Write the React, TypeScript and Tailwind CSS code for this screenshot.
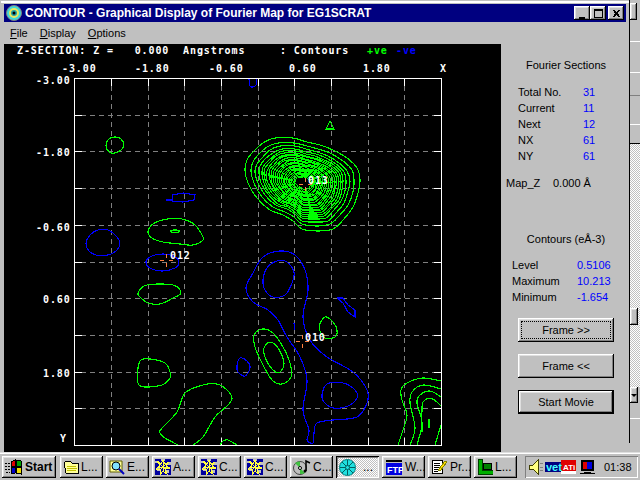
import React from "react";

type P = [number, number];
const smooth = (pts: P[], closed = true) => {
  const n = pts.length;
  const g = (i: number) => (closed ? pts[(i + n) % n] : pts[Math.max(0, Math.min(n - 1, i))]);
  let d = `M${pts[0][0]} ${pts[0][1]}`;
  const m = closed ? n : n - 1;
  for (let i = 0; i < m; i++) {
    const a = g(i - 1), b = g(i), c = g(i + 1), e = g(i + 2);
    const c1 = [b[0] + (c[0] - a[0]) / 6, b[1] + (c[1] - a[1]) / 6];
    const c2 = [c[0] - (e[0] - b[0]) / 6, c[1] - (e[1] - b[1]) / 6];
    d += `C${c1[0].toFixed(1)} ${c1[1].toFixed(1)} ${c2[0].toFixed(1)} ${c2[1].toFixed(1)} ${c[0]} ${c[1]}`;
  }
  return d + (closed ? "Z" : "");
};
const G = "#00ff00";
const B = "#0000ff";

const outer: P[] = [[245,170],[247,160],[253,152],[263,143],[275,138],[293,138],[307,142],[320,145],[333,150],[347,158],[357,168],[360,180],[358,193],[353,207],[343,220],[333,229],[318,231],[302,229],[293,221],[283,215],[270,210],[257,198],[248,183]];
const factors = [1,0.9,0.82,0.76,0.71,0.67,0.63,0.59,0.555,0.52,0.485,0.45,0.415,0.38,0.35,0.32,0.29,0.26,0.23,0.2,0.17,0.14];
const closedGreen: P[][] = [
  [[106,145],[109,139],[115,137],[121,139],[124,145],[121,150],[115,153],[109,152]],
  [[148,232],[153,224],[167,219],[182,219],[195,225],[202,235],[203,240],[193,245],[180,244],[163,242],[152,238]],
  [[170,231],[175,230],[180,231],[175,233]],
  [[138,293],[147,285],[173,285],[181,293],[173,298],[160,304],[148,303],[141,298]],
  [[319,327],[325,317],[333,322],[337,330],[335,337],[325,338]],
  [[254,335],[262,329],[273,333],[283,347],[290,363],[291,377],[282,384],[272,380],[262,363],[255,347]],
  [[264,348],[270,342],[278,348],[284,363],[280,372],[273,370],[265,357]],
  [[138,368],[141,360],[150,359],[165,363],[170,372],[170,378],[162,385],[145,387],[138,383]],
];
const openGreen: P[][] = [
  [[178,445],[165,438],[160,433],[162,428],[177,412],[185,393],[203,385],[217,384],[227,390],[232,398],[228,405],[215,417],[203,437],[193,445]],
  [[220,445],[223,441],[228,440],[237,445]],
  [[398,445],[403,430],[407,415],[402,400],[401,390],[407,383],[423,378],[441,381]],
  [[410,445],[415,428],[410,403],[412,392],[423,385],[441,389]],
  [[417,445],[422,423],[417,403],[420,395],[430,391],[441,397]],
  [[435,445],[441,425]],
  [[422,432],[422,410],[423,402],[430,398],[437,402],[441,406]],
];
const closedBlue: P[][] = [
  [[86,243],[90,235],[98,230],[108,230],[116,236],[120,243],[116,251],[108,255],[96,255],[89,251]],
  [[146,263],[150,257],[163,254],[175,257],[179,263],[175,268],[163,271],[152,269]],
  [[313,443],[307,440],[309,430],[303,410],[307,380],[300,357],[287,337],[278,320],[268,310],[253,302],[246,288],[253,273],[263,257],[280,251],[295,255],[305,270],[308,290],[303,317],[310,340],[327,357],[353,372],[367,390],[367,403],[357,417],[333,420],[317,423],[314,433]],
  [[263,280],[267,268],[277,261],[287,262],[294,272],[292,283],[285,295],[273,297],[265,290]],
  [[237,366],[240,358],[247,361],[250,368],[245,376],[238,372]],
  [[322,395],[327,384],[343,383],[355,390],[357,398],[348,406],[333,408],[324,402]],
];
const polyBlue = ["166,200 172,200 173,195 183,193 195,195 194,200 183,202 172,201","337,298 343,298 348,305 355,310 355,317 348,312 343,303 337,298","294,323 295,330"];
const xs = [111,148,184,221,258,294,331,368,404];
const ys = [115,151,188,225,262,298,335,372,408];

const Cross = ({ x, y }: { x: number; y: number }) => (
  <path d={`M${x-6} ${y}h4M${x+3} ${y}h4M${x} ${y-6}v4M${x} ${y+3}v4`} stroke="#ff8040" fill="none" />
);

const Plot = () => {
  const mono = { fontFamily: '"DejaVu Sans Mono", monospace', fontWeight: 700, fontSize: 10 } as const;
  const T = ({ x, y, c = "#fff", s }: { x: number; y: number; c?: string; s: string }) => (
    <text x={x} y={y} fill={c} style={{ ...mono, letterSpacing: 0.9, whiteSpace: "pre" }}>{s}</text>
  );
  return (
    <svg viewBox="4 44 497 408" className="w-[497px] h-[408px] bg-black block" shapeRendering="crispEdges">
      <T x={17} y={54} s="Z-SECTION: Z =   0.000  Angstroms     : Contours" />
      <T x={367} y={54} c={G} s="+ve" />
      <T x={396} y={54} c={B} s="-ve" />
      {[[62,"-3.00"],[135,"-1.80"],[209,"-0.60"],[289,"0.60"],[363,"1.80"],[440,"X"]].map(([x, s]) => (
        <T key={s as string} x={x as number} y={72} s={s as string} />
      ))}
      {[[36,84,"-3.00"],[36,156,"-1.80"],[36,231,"-0.60"],[43,303,"0.60"],[43,377,"1.80"],[60,442,"Y"]].map(([x, y, s]) => (
        <T key={s as string} x={x as number} y={y as number} s={s as string} />
      ))}
      {xs.map((x) => (
        <g key={x}>
          <path d={`M${x} 86V438`} stroke="#808080" strokeDasharray="5 4" />
          <path d={`M${x} 79v7M${x} 438v7`} stroke="#fff" />
        </g>
      ))}
      {ys.map((y) => (
        <g key={y}>
          <path d={`M81 ${y}H434`} stroke="#808080" strokeDasharray="5 4" />
          <path d={`M75 ${y}h7M434 ${y}h7`} stroke="#fff" />
        </g>
      ))}
      <rect x={74.5} y={78.5} width={367} height={367} fill="none" stroke="#fff" />
      <g fill="none" stroke={G} strokeWidth={1.15}>
        {factors.map((f) => (
          <path key={f} d={smooth(outer.map(([x, y]) => [Math.round(303 + (x - 303) * f), Math.round(183 + (y - 183) * f)] as P))} />
        ))}
        {closedGreen.map((p, i) => <path key={i} d={smooth(p)} />)}
        {openGreen.map((p, i) => <path key={i} d={smooth(p, false)} />)}
        <path d="M330 121L334 129H326Z" />
        <path d="M429 419V428" />
      </g>
      <g fill="none" stroke={B} strokeWidth={1.15}>
        {closedBlue.map((p, i) => <path key={i} d={smooth(p)} />)}
        {polyBlue.map((p) => <polyline key={p} points={p} />)}
        <path d={smooth([[249,79],[250,86],[253,87],[256,85],[257,79]], false)} />
      </g>
      <Cross x={305} y={184} />
      <Cross x={166} y={260} />
      <Cross x={302} y={341} />
      <T x={308} y={184} s="013" />
      <T x={170} y={259} s="012" />
      <T x={305} y={341} s="010" />
    </svg>
  );
};

const RAISED = "shadow-[inset_-1px_-1px_0_#000,inset_1px_1px_0_#fff,inset_-2px_-2px_0_#808080,inset_2px_2px_0_#dfdfdf]";

const Row = ({ l, v, lw }: { l: string; v: string; lw: string }) => (
  <div className="flex h-[16px] items-center">
    <span className={lw}>{l}</span>
    <span className="text-[#0000ff]">{v}</span>
  </div>
);

const Cap = ({ children, sel, def }: { children: React.ReactNode; sel?: boolean; def?: boolean }) => (
  <div className={`mx-[17px] w-[96px] h-[24px] flex items-center justify-center relative bg-[#c0c0c0] ${def ? "border border-black" : ""} ${RAISED}`}>
    {sel && <div className="absolute inset-[3px] border border-dotted border-black" />}
    <span>{children}</span>
  </div>
);

const Flag = () => (
  <svg width="18" height="16" viewBox="0 0 18 16" shapeRendering="crispEdges">
    <path d="M0 4h5M0 7h5M0 10h5M1 13h4" stroke="#000" strokeDasharray="2 1" />
    <path d="M6 3l4-2v6l-4 1z" fill="#e00000" stroke="#000" />
    <path d="M11 1l5 1v6l-5-1z" fill="#00a000" stroke="#000" />
    <path d="M6 9l4-1v6l-4 1z" fill="#0000d0" stroke="#000" />
    <path d="M11 8l5 1v6l-5-1z" fill="#f0e000" stroke="#000" />
  </svg>
);
const Folder = () => (
  <svg width="16" height="16" viewBox="0 0 16 16" shapeRendering="crispEdges">
    <path d="M1 4l2-2h4l2 2h6v10H3z" fill="#ffff99" stroke="#000" />
    <path d="M4 7h9M4 9h10M4 11h9" stroke="#c0c000" />
  </svg>
);
const Explore = () => (
  <svg width="16" height="16" viewBox="0 0 16 16">
    <path d="M1 2h12v11H1z" fill="#ffff99" stroke="#606000" />
    <circle cx="7" cy="7" r="4" fill="#80e0ff" stroke="#000" />
    <path d="M10 10l5 5" stroke="#0000c0" strokeWidth="2" />
  </svg>
);
const Mesh = () => (
  <svg width="16" height="16" viewBox="0 0 16 16" shapeRendering="crispEdges">
    <rect width="16" height="16" fill="#0000a0" />
    <path d="M0 2h3v2H0zM6 0h4v2H6zM12 3h4v3h-4zM2 9h3v3H2zM11 11h3v3h-3z" fill="#c0c0c0" />
    <path d="M2 2l4 3 2-4 2 4 4-2-3 4 4 2-5 1 2 5-4-3-3 4 0-5-4-1 4-3z" fill="none" stroke="#ffff40" />
    <path d="M5 5l6 6M11 5l-6 6M3 8h10M8 3v10" stroke="#ffff40" />
  </svg>
);
const Cd = () => (
  <svg width="18" height="16" viewBox="0 0 18 16">
    <circle cx="7" cy="9" r="6.5" fill="#c0c0c0" stroke="#404040" />
    <path d="M7 9L2 4A7 7 0 0 1 7 2.5zM7 9l5 5a7 7 0 0 1-5 1z" fill="#40c040" />
    <circle cx="7" cy="9" r="1.5" fill="#fff" stroke="#000" />
    <path d="M13 12V2l4 2" stroke="#000" strokeWidth="1.5" fill="none" />
    <circle cx="12" cy="12" r="1.5" fill="#000" />
  </svg>
);
const Snow = () => (
  <svg width="17" height="17" viewBox="0 0 17 17">
    <circle cx="8.5" cy="8.5" r="8" fill="#20e0e0" stroke="#008080" />
    <path d="M8.5 1v15M1 8.5h15M3 3l11 11M14 3L3 14" stroke="#006060" />
    <circle cx="8.5" cy="8.5" r="2" fill="#20e0e0" stroke="#006060" />
  </svg>
);
const Ftp = () => (
  <svg width="18" height="15" viewBox="0 0 18 15" shapeRendering="crispEdges">
    <rect x="1" y="0" width="16" height="2" fill="#000" />
    <rect x="1" y="3" width="16" height="12" fill="#0000e0" />
    <text x="2" y="13" fill="#fff" style={{ fontFamily: '"Liberation Sans", sans-serif', fontSize: 9, fontWeight: 700, letterSpacing: 0 }}>FTP</text>
  </svg>
);
const Note = () => (
  <svg width="17" height="16" viewBox="0 0 17 16" shapeRendering="crispEdges">
    <path d="M1 1h10v13H1z" fill="#fff" stroke="#000" />
    <path d="M3 4h6M3 6h6M3 8h5M3 10h6M3 12h4" stroke="#000" />
    <path d="M7 11l7-9 2 1-7 9z" fill="#ffe000" stroke="#808000" />
  </svg>
);
const LIcon = () => (
  <svg width="16" height="16" viewBox="0 0 16 16" shapeRendering="crispEdges">
    <path d="M1 0h4v11h11v4H1z" fill="#00b000" stroke="#004000" />
    <rect x="6" y="4" width="8" height="6" fill="#008000" stroke="#000" />
  </svg>
);
const TaskBtn = ({ icon, text, active }: { icon: React.ReactNode; text: string; active?: boolean }) => (
  <div className={`w-[43px] h-[22px] flex items-center pl-[3px] gap-[2px] overflow-hidden ${active ? "bg-[repeating-conic-gradient(#ffffff_0_25%,#c0c0c0_0_50%)] bg-[length:2px_2px] shadow-[inset_1px_1px_0_#000,inset_-1px_-1px_0_#fff,inset_2px_2px_0_#808080,inset_-2px_-2px_0_#dfdfdf]" : RAISED}`}>
    <span className="shrink-0 flex">{icon}</span>
    <span className={`whitespace-nowrap ${active ? "pl-[5px]" : ""}`}>{text}</span>
  </div>
);
const Tray = () => (
  <div className="ml-auto mr-[2px] w-[113px] h-[22px] flex items-center shadow-[inset_1px_1px_0_#808080,inset_-1px_-1px_0_#fff] pl-[2px]">
    <svg width="76" height="16" viewBox="0 0 76 16" className="shrink-0" shapeRendering="crispEdges">
      <path d="M2 6h4l5-5v14l-5-5H2z" fill="#ffff80" stroke="#404000" />
      <path d="M13 5l3-1M13 8h3M13 11l3 1" stroke="#808080" />
      <rect x="18" y="3" width="16" height="10" fill="#000080" />
      <rect x="34" y="1" width="15" height="11" fill="#e00000" />
      <rect x="34" y="12" width="15" height="3" fill="#fff" />
      <text x="19" y="12" fill="#40ffff" style={{ fontFamily: '"Liberation Sans", sans-serif', fontSize: 11, fontWeight: 700 }}>vet</text>
      <text x="36" y="11" fill="#fff" style={{ fontFamily: '"Liberation Sans", sans-serif', fontSize: 8, fontWeight: 700 }}>ATi</text>
      <rect x="54" y="1" width="13" height="11" fill="#000" />
      <rect x="56" y="3" width="4" height="7" fill="#e00000" />
      <rect x="60" y="3" width="5" height="7" fill="#0000e0" />
      <rect x="57" y="13" width="7" height="1" fill="#000" />
      <rect x="53" y="14" width="15" height="1" fill="#000" />
    </svg>
    <span className="ml-[1px] text-[11px]">01:38</span>
  </div>
);

export default function App() {
  return (
    <div className="w-[640px] h-[480px] bg-[#c0c0c0] overflow-hidden flex flex-col text-[11px] text-black font-['Liberation_Sans',Arial,sans-serif]">
      <div className="h-[452px] flex shrink-0">
        {/* contour window */}
        <div className="w-[629px] h-[452px] pt-[1px] flex flex-col shrink-0">
          <div className="h-[2px] ml-[1px] bg-white shrink-0" />
          <div className="h-[1px] shrink-0" />
          <div className="h-[18px] ml-[4px] mr-[3px] bg-[#000080] flex items-center shrink-0 relative">
            <svg width="16" height="16" viewBox="0 0 16 16" className="ml-[2px] shrink-0">
              <circle cx="8" cy="8" r="7.5" fill="#40d8d8" stroke="#808080" />
              <circle cx="8" cy="8" r="5" fill="#e8e860" />
              <circle cx="8" cy="8" r="3" fill="#20a0a0" />
              <circle cx="8" cy="8" r="1.5" fill="#000" />
            </svg>
            <span className="ml-[3px] text-white font-bold text-[12px] whitespace-nowrap">CONTOUR - Graphical Display of Fourier Map for EG1SCRAT</span>
            <div className="ml-auto mr-[2px] flex items-center">
              {[
                <path key="a" d="M3 10h6v2H3z" fill="#000" />,
                <path key="b" d="M2.5 2.5h8v8h-8zM2 3h9" stroke="#000" fill="none" />,
                <path key="c" d="M3 3l6 7M4 3l6 7M9 3L3 10M10 3L4 10" stroke="#000" fill="none" />,
              ].map((ic, i) => (
                <div key={i} className={`w-[16px] h-[14px] bg-[#c0c0c0] flex items-center justify-center ${i === 1 ? "mr-[2px]" : ""} ${RAISED}`}>
                  <svg width="13" height="13" viewBox="0 0 13 13" shapeRendering="crispEdges">{ic}</svg>
                </div>
              ))}
            </div>
          </div>
          <div className="h-[22px] pl-[10px] flex items-center gap-[12px] shrink-0">
            <span><u>F</u>ile</span>
            <span><u>D</u>isplay</span>
            <span><u>O</u>ptions</span>
          </div>
          <div className="flex pl-[4px] flex-1 min-h-0">
            <Plot />
            <div className="w-[128px] flex flex-col">
              <div className="pt-[13px] h-[29px] text-center pr-[2px] pl-[4px]">Fourier Sections</div>
              <div className="mt-[11px] pl-[17px]">
                <Row l="Total No." v="31" lw="w-[65px]" />
                <Row l="Current" v="11" lw="w-[65px]" />
                <Row l="Next" v="12" lw="w-[65px]" />
                <Row l="NX" v="61" lw="w-[65px]" />
                <Row l="NY" v="61" lw="w-[65px]" />
              </div>
              <div className="mt-[11px] pl-[5px]">
                <Row l="Map_Z" v="" lw="w-[47px]" />
              </div>
              <div className="-mt-[16px] pl-[52px] h-[16px] flex items-center">0.000 Å</div>
              <div className="mt-[40px] h-[16px] flex items-center justify-center pl-[2px]">Contours (eÅ-3)</div>
              <div className="mt-[10px] pl-[11px]">
                <Row l="Level" v="0.5106" lw="w-[65px]" />
                <Row l="Maximum" v="10.213" lw="w-[65px]" />
                <Row l="Minimum" v="-1.654" lw="w-[65px]" />
              </div>
              <div className="mt-[13px] flex flex-col gap-[12px]">
                <Cap sel>Frame &gt;&gt;</Cap>
                <Cap>Frame &lt;&lt;</Cap>
                <Cap def>Start Movie</Cap>
              </div>
            </div>
          </div>
        </div>
        {/* window behind */}
        <div className="w-[11px] h-[443px] border-l border-black flex flex-col shrink-0">
          <div className="h-[144px] bg-[#c0c0c0] border-b border-black flex flex-col shrink-0">
            <div className="h-[3px]" />
            <div className={`h-[17px] w-[7px] ${RAISED}`} />
            <div className="h-[21px]" />
            <div className="h-[1px] bg-white" />
            <div className="h-[30px]" />
            <div className="h-[1px] bg-white" />
            <div className="h-[22px]" />
            <div className="h-[1px] bg-[#808080]" />
            <div className="h-[28px]" />
            <div className="h-[1px] bg-white" />
          </div>
          <div className="flex-1 flex flex-col bg-[repeating-conic-gradient(#ffffff_0_25%,#c0c0c0_0_50%)] bg-[length:2px_2px]">
            <div className="h-[164px]" />
            <div className={`h-[17px] w-[8px] bg-[#c0c0c0] ${RAISED}`} />
            <div className="h-[62px]" />
            <div className="flex-1 bg-[#c0c0c0] flex flex-col">
              <div className={`h-[16px] w-[8px] flex items-center justify-center ${RAISED}`}>
                <div className="w-0 h-0 border-x-[3px] border-x-transparent border-t-[3px] border-t-black" />
              </div>
              <div className="h-[15px]" />
              <div className="h-[1px] bg-white" />
            </div>
          </div>
        </div>
      </div>
      {/* taskbar */}
      <div className="flex-1 flex flex-col border-t border-[#dfdfdf]">
        <div className="h-[1px] bg-white shrink-0" />
        <div className="flex items-start pt-[2px] pl-[2px] gap-[3px] text-[12px]">
          <div className={`w-[54px] h-[22px] mr-[1px] flex items-center pl-[3px] gap-[2px] font-bold text-[12px] ${RAISED}`}>
            <Flag />
            <span>Start</span>
          </div>
          <TaskBtn icon={<Folder />} text="L..." />
          <TaskBtn icon={<Explore />} text="E..." />
          <TaskBtn icon={<Mesh />} text="A..." />
          <TaskBtn icon={<Mesh />} text="C..." />
          <TaskBtn icon={<Mesh />} text="C..." />
          <TaskBtn icon={<Cd />} text="C..." />
          <TaskBtn icon={<Snow />} text="..." active />
          <TaskBtn icon={<Ftp />} text="W..." />
          <TaskBtn icon={<Note />} text="Pr..." />
          <TaskBtn icon={<LIcon />} text="L..." />
          <Tray />
        </div>
      </div>
    </div>
  );
}
